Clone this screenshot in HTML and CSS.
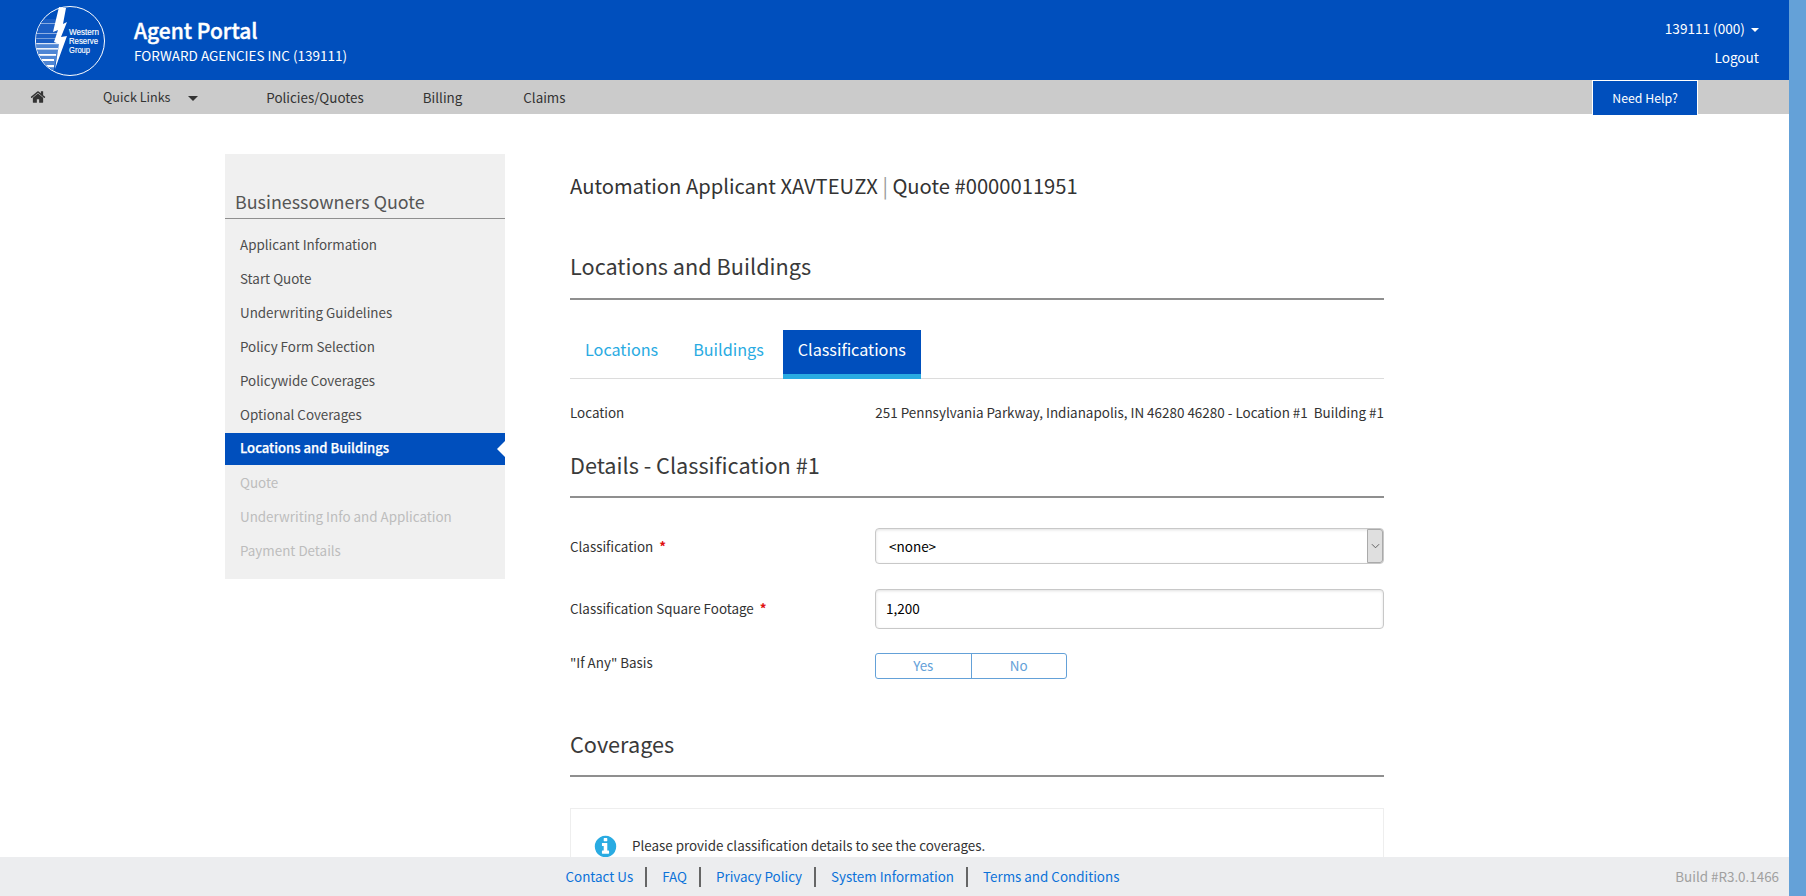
FILE: index.html
```html
<!DOCTYPE html>
<html lang="en">
<head>
    <meta charset="UTF-8">
    <meta name="viewport" content="width=device-width, initial-scale=1.0">
    <title>Agent Portal</title>
    <link rel="stylesheet" href="styles.css">
</head>
<body>
    <div class="page">
        <!-- Top header -->
        <header class="top-bar">
            <svg class="logo" viewBox="0 0 72 72" aria-label="Western Reserve Group">
                <defs>
                    <clipPath id="logo-clip"><circle cx="36" cy="36" r="34"/></clipPath>
                </defs>
                <circle cx="36" cy="36" r="34.500" fill="#004fbd" stroke="#fff" stroke-width="1"/>
                <g clip-path="url(#logo-clip)">
                    <path d="M0 38 L26 38 L18 72 L0 72 Z" fill="#4f86d4"/>
                    <path d="M0 14 L28 14 L24 38 L0 38 Z" fill="#1c5fc4"/>
                    <g fill="#fff">
                        <rect x="0" y="18" width="28" height="0.8" opacity="0.6"/>
                        <rect x="0" y="28" width="26" height="1" opacity="0.5"/>
                        <rect x="0" y="33" width="26" height="0.8" opacity="0.5"/>
                        <rect x="0" y="38" width="26" height="1.200" opacity="0.8"/>
                        <rect x="0" y="43" width="24" height="1.600" opacity="0.9"/>
                        <rect x="0" y="49" width="22" height="1.800"/>
                        <rect x="0" y="54" width="20" height="2"/>
                        <rect x="0" y="60" width="20" height="2.200"/>
                    </g>
                </g>
                <path d="M25 2 L32 3 L29 19 L33 17 L27 32 L33 31 L21 64 L25 39 L20 37 L24 25 L19 27 Z" fill="#fff"/>
                <g class="logo-text">
                    <text x="35" y="30" textLength="30" lengthAdjust="spacingAndGlyphs">Western</text>
                    <text x="35" y="39" textLength="29" lengthAdjust="spacingAndGlyphs">Reserve</text>
                    <text x="35" y="48" textLength="21" lengthAdjust="spacingAndGlyphs">Group</text>
                </g>
            </svg>
            <div class="brand">
                <div class="brand-title">Agent Portal</div>
                <div class="brand-agency">FORWARD AGENCIES INC (139111)</div>
            </div>
            <div class="account">
                <div class="account-id">139111 (000) <span class="caret caret-white"></span></div>
                <a class="account-logout">Logout</a>
            </div>
        </header>

        <!-- Main navigation -->
        <nav class="main-nav">
            <svg class="home-icon" viewBox="0 0 1792 1792"><path d="M1472 992v480q0 26-19 45t-45 19h-384v-384h-256v384h-384q-26 0-45-19t-19-45v-480q0-1 .5-3t.5-3l575-474 575 474q1 2 1 6zm223-69l-62 74q-8 9-21 11h-3q-13 0-21-7l-692-577-692 577q-12 8-24 7-13-2-21-11l-62-74q-8-10-7-23.500t11-21.500l719-599q32-26 76-26t76 26l244 204v-195q0-14 9-23t23-9h192q14 0 23 9t9 23v408l219 182q10 8 11 21.500t-7 23.500z"/></svg>
            <a class="nav-quick">Quick Links <span class="caret caret-dark"></span></a>
            <a class="nav-policies">Policies/Quotes</a>
            <a class="nav-billing">Billing</a>
            <a class="nav-claims">Claims</a>
            <a class="need-help">Need Help?</a>
        </nav>

        <div class="content">
            <!-- Quote steps -->
            <aside class="sidebar">
                <h2 class="sidebar-title">Businessowners Quote</h2>
                <ul class="steps">
                    <li>Applicant Information</li>
                    <li>Start Quote</li>
                    <li>Underwriting Guidelines</li>
                    <li>Policy Form Selection</li>
                    <li>Policywide Coverages</li>
                    <li>Optional Coverages</li>
                    <li class="active">Locations and Buildings</li>
                    <li class="disabled">Quote</li>
                    <li class="disabled">Underwriting Info and Application</li>
                    <li class="disabled">Payment Details</li>
                </ul>
            </aside>

            <main class="main">
                <h1 class="quote-title">Automation Applicant XAVTEUZX <span class="pipe">|</span> Quote #0000011951</h1>

                <h2 class="section-title first">Locations and Buildings</h2>

                <div class="tabs">
                    <a class="tab">Locations</a>
                    <a class="tab">Buildings</a>
                    <a class="tab active">Classifications</a>
                </div>

                <div class="location-row">
                    <div class="field-label">Location</div>
                    <div class="location-value">251 Pennsylvania Parkway, Indianapolis, IN 46280 46280 - Location #1&nbsp; Building #1</div>
                </div>

                <h2 class="section-title details">Details - Classification #1</h2>

                <div class="field field-select">
                    <label class="field-label">Classification <span class="req">*</span></label>
                    <div class="select-wrap">
                        <select><option>&lt;none&gt;</option></select>
                        <span class="select-arrow"><svg viewBox="0 0 10 6"><path d="M1 1l4 4 4-4" fill="none" stroke="#555" stroke-width="1"/></svg></span>
                    </div>
                </div>

                <div class="field field-input">
                    <label class="field-label">Classification Square Footage <span class="req">*</span></label>
                    <input type="text" value="1,200">
                </div>

                <div class="field field-toggle">
                    <label class="field-label">"If Any" Basis</label>
                    <div class="toggle">
                        <button>Yes</button>
                        <button>No</button>
                    </div>
                </div>

                <h2 class="section-title coverages">Coverages</h2>

                <div class="info-box">
                    <svg class="info-icon" viewBox="0 0 1792 1792"><path d="M1152 1376v-160q0-14-9-23t-23-9h-96v-512q0-14-9-23t-23-9h-320q-14 0-23 9t-9 23v160q0 14 9 23t23 9h96v320h-96q-14 0-23 9t-9 23v160q0 14 9 23t23 9h448q14 0 23-9t9-23zm-128-896v-160q0-14-9-23t-23-9h-192q-14 0-23 9t-9 23v160q0 14 9 23t23 9h192q14 0 23-9t9-23zm640 416q0 209-103 385.500t-279.500 279.500-385.500 103-385.500-103-279.500-279.500-103-385.500 103-385.500 279.500-279.500 385.500-103 385.500 103 279.500 279.500 103 385.500z"/></svg>
                    <span>Please provide classification details to see the coverages.</span>
                </div>
            </main>
        </div>

        <footer class="footer">
            <div class="footer-links">
                <a>Contact Us</a>
                <a>FAQ</a>
                <a>Privacy Policy</a>
                <a>System Information</a>
                <a>Terms and Conditions</a>
            </div>
            <div class="build">Build #R3.0.1466</div>
        </footer>
    </div>
    <!-- Scrollbar strip on the right edge -->
    <div class="side-strip"></div>
</body>
</html>
```

FILE: styles.css
```css
/* Global styles */
* {
    box-sizing: border-box;
}

html,
body {
    height: 100%;
}

body {
    display: flex;
    margin: 0;
    overflow: hidden;
    font-family: "Noto Sans CJK SC", "Noto Sans", sans-serif;
    font-size: 13.4px;
    color: #333;
    background-color: #fff;
}

.page {
    display: flex;
    flex: 1;
    flex-direction: column;
    min-width: 0;
    height: 100%;
}

.side-strip {
    flex: 0 0 17px;
    background-color: #64a1d8;
}

/* Header */
.top-bar {
    display: flex;
    flex: 0 0 80px;
    align-items: flex-start;
    padding: 6px 30px 0 34px;
    color: #fff;
    background-color: #004fbd;
}

.logo {
    flex: 0 0 72px;
    width: 72px;
    height: 72px;
    margin-top: -1px;
}

.logo-text text {
    font-family: "Liberation Sans", sans-serif;
    font-size: 9px;
    fill: #fff;
    stroke: #fff;
    stroke-width: 0.15px;
}

.brand {
    margin-left: 28px;
    padding-top: 9px;
}

.brand-title {
    font-size: 21px;
    font-weight: 500;
    line-height: 30px;
    -webkit-text-stroke: 0.4px #fff;
}

.brand-agency {
    font-size: 13.5px;
    line-height: 20px;
}

.account {
    margin-left: auto;
    padding-top: 12px;
    font-size: 13.6px;
    text-align: right;
}

.account-id {
    line-height: 20px;
}

.account-logout {
    display: block;
    margin-top: 9px;
    line-height: 20px;
}

.caret {
    display: inline-block;
    width: 0;
    height: 0;
    margin-left: 3px;
    vertical-align: 2px;
    border-top: 4px solid #fff;
    border-right: 4px solid transparent;
    border-left: 4px solid transparent;
}

.caret-dark {
    margin-left: 15px;
    vertical-align: 1px;
    border-top-width: 5px;
    border-top-color: #333;
    border-right-width: 5px;
    border-left-width: 5px;
}

/* Navigation */
.main-nav {
    display: flex;
    flex: 0 0 34px;
    align-items: center;
    min-height: 0;
    font-size: 13.4px;
    color: #333;
    background-color: #cbcbcb;
}

.main-nav a {
    padding-bottom: 1px;
}

.home-icon {
    width: 16px;
    height: 16px;
    margin-left: 30px;
    fill: #333;
}

.nav-quick {
    margin-left: 57px;
    font-size: 12.6px;
}

.nav-policies {
    margin-left: 68px;
}

.nav-billing {
    margin-left: 59px;
}

.nav-claims {
    margin-left: 61px;
}

.need-help {
    align-self: flex-start;
    width: 106px;
    height: 35px;
    margin-left: auto;
    margin-right: 91px;
    border: 1px solid #fff;
    border-bottom: none;
    font-size: 12.3px;
    line-height: 35px;
    text-align: center;
    color: #fff;
    background-color: #004fbd;
}

/* Content area */
.content {
    display: flex;
    flex: 1;
    align-items: flex-start;
    min-height: 0;
    overflow: hidden;
    padding: 40px 0 0 225px;
}

.sidebar {
    flex: 0 0 280px;
    height: 425px;
    padding-top: 34px;
    background-color: #f0f0f0;
}

.sidebar-title {
    margin: 0;
    padding: 0 10px 3px;
    border-bottom: 1px solid #8f8f8f;
    font-size: 17.9px;
    font-weight: 400;
    line-height: 27px;
    color: #555;
}

.steps {
    margin: 10px 0 0;
    padding: 0;
    list-style: none;
}

.steps li {
    height: 32px;
    margin-bottom: 2px;
    padding-left: 15px;
    line-height: 30px;
    color: #4d4d4d;
}

.steps li.active {
    position: relative;
    font-size: 13.1px;
    font-weight: 500;
    color: #fff;
    background-color: #004fbd;
    -webkit-text-stroke: 0.25px #fff;
}

/* White notch on the active step */
.steps li.active::after {
    content: "";
    position: absolute;
    top: 8px;
    right: 0;
    border-top: 8px solid transparent;
    border-right: 8px solid #fff;
    border-bottom: 8px solid transparent;
}

.steps li.disabled {
    color: #bdbdbd;
}

/* Main column */
.main {
    flex: 0 0 814px;
    min-width: 0;
    margin-left: 65px;
}

.quote-title {
    margin: 0;
    padding-top: 16px;
    font-size: 20.2px;
    font-weight: 400;
    line-height: 31px;
    color: #333;
}

.pipe {
    color: #999;
}

.section-title {
    margin: 0;
    border-bottom: 2px solid #8f8f8f;
    font-size: 21.7px;
    font-weight: 400;
    line-height: 32px;
    color: #3a3a3a;
}

.section-title.first {
    margin-top: 49px;
    padding-bottom: 16px;
}

/* Tabs */
.tabs {
    display: flex;
    height: 49px;
    margin-top: 30px;
    border-bottom: 1px solid #dcdcdc;
}

.tab {
    height: 49px;
    padding: 0 15px;
    font-size: 16.2px;
    line-height: 38px;
    color: #29abe2;
}

.tab + .tab {
    margin-left: 5px;
}

.tab.active {
    margin-left: 4px;
    color: #fff;
    background-color: #004fbd;
    border-bottom: 5px solid #29abe2;
}

.location-row {
    display: flex;
    justify-content: space-between;
    margin-top: 21px;
    line-height: 24px;
}

.location-value {
    font-size: 13.45px;
    white-space: nowrap;
}

.section-title.details {
    margin-top: 25px;
    padding-bottom: 15px;
}

/* Form fields */
.field {
    display: flex;
}

.field-label {
    flex: 0 0 305px;
}

.req {
    margin-left: 3px;
    color: #e01010;
    font-weight: bold;
}

.field-select {
    align-items: center;
    margin-top: 30px;
}

.select-wrap {
    position: relative;
    flex: 1;
    height: 36px;
}

select,
input {
    width: 100%;
    border: 1px solid #c8c8c8;
    border-radius: 4px;
    font-family: inherit;
    font-size: 13.5px;
    color: #000;
    background-color: #fff;
    box-shadow: inset 0 1px 3px rgba(0, 0, 0, 0.12);
}

select {
    height: 36px;
    padding: 0 13px;
    appearance: none;
}

.select-arrow {
    position: absolute;
    top: 1px;
    right: 1px;
    display: flex;
    align-items: center;
    justify-content: center;
    width: 16px;
    height: 34px;
    border: 1px solid #aaa;
    border-radius: 0 3px 3px 0;
    background-color: #dfdfdf;
}

.select-arrow svg {
    width: 9px;
    height: 6px;
}

.field-input {
    align-items: center;
    margin-top: 25px;
}

.field-input .field-label {
    padding-bottom: 2px;
}

input {
    flex: 1;
    height: 40px;
    padding: 0 10px 2px;
}

.field-toggle {
    margin-top: 24px;
    line-height: 18px;
}

.toggle {
    display: flex;
    width: 192px;
    height: 26px;
    border: 1px solid #64a1d8;
    border-radius: 3px;
}

.toggle button {
    flex: 1;
    padding: 0 0 2px;
    border: none;
    font-family: inherit;
    font-size: 13.4px;
    color: #64a1d8;
    background: none;
}

.toggle button + button {
    border-left: 1px solid #64a1d8;
}

.section-title.coverages {
    margin-top: 49px;
    padding-bottom: 15px;
}

/* Info box */
.info-box {
    display: flex;
    align-items: flex-start;
    height: 80px;
    margin-top: 31px;
    padding: 25px 21px 0 22px;
    border: 1px solid #eee;
}

.info-icon {
    flex: 0 0 25px;
    width: 25px;
    height: 25px;
    fill: #29abe2;
}

.info-box span {
    margin: 1px 0 0 14px;
    line-height: 20px;
}

/* Footer */
.footer {
    position: relative;
    display: flex;
    flex: 0 0 39px;
    align-items: center;
    padding-left: 559px;
    background-color: #ecedef;
}

.footer-links {
    display: flex;
}

.footer-links a {
    height: 20px;
    padding: 0 12px 0 15px;
    line-height: 18px;
    color: #0b72d9;
}

.footer-links a:first-child {
    padding-left: 6.5px;
}

.footer-links a + a {
    border-left: 2px solid #666;
}

.build {
    position: absolute;
    right: 10px;
    padding-bottom: 2px;
    color: #a0a0a0;
}
```
